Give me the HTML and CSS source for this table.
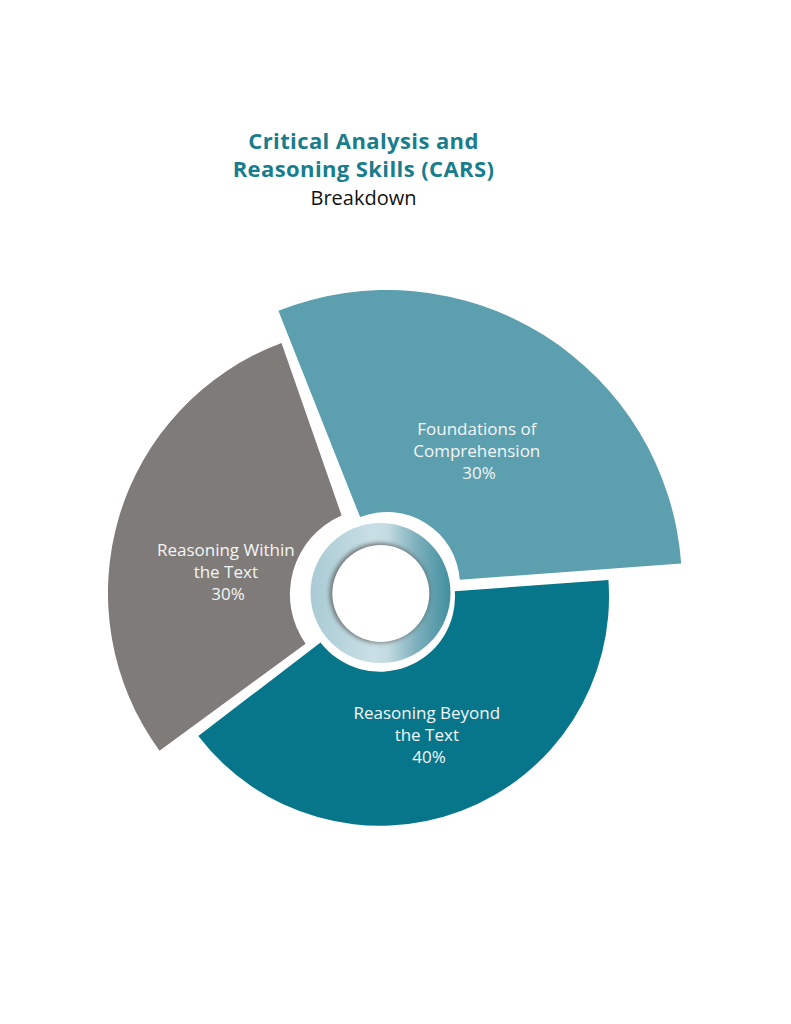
FILE: index.html
```html
<!DOCTYPE html>
<html lang="en">
<head>
<meta charset="utf-8">
<title>CARS Breakdown</title>
<link rel="stylesheet" href="styles.css">
</head>
<body>
<main class="page">
  <header class="title-block">
    <h1 class="title">Critical Analysis and<br>Reasoning Skills (CARS)</h1>
    <p class="subtitle">Breakdown</p>
  </header>
  <section class="chart">
    <svg class="chart-svg" width="791" height="774" viewBox="0 250 791 774" xmlns="http://www.w3.org/2000/svg">
      <defs>
        <linearGradient id="ringGrad" x1="0" y1="0" x2="1" y2="0">
          <stop offset="0" stop-color="#a9cbd4"/>
          <stop offset="0.45" stop-color="#c9dfe5"/>
          <stop offset="0.55" stop-color="#c3dbe1"/>
          <stop offset="0.75" stop-color="#7fb1bd"/>
          <stop offset="1" stop-color="#418f9f"/>
        </linearGradient>
        <filter id="holeShadow" x="-20%" y="-20%" width="140%" height="140%">
          <feGaussianBlur stdDeviation="2"/>
        </filter>
      </defs>
      <path class="slice slice-light" d="M278.4,310.7 A295,295 0 0 1 681.2,563.4 L459.8,579.7 A73,73 0 0 0 360.1,517.1 Z"/>
      <path class="slice slice-dark" d="M608.4,579.9 A229,229 0 0 1 198.3,736.1 L320.5,642.4 A75,75 0 0 0 454.8,591.2 Z"/>
      <path class="slice slice-gray" d="M159.5,750.7 A267,267 0 0 1 281.5,342.9 L341.6,515.4 A86,86 0 0 0 305.6,643.8 Z"/>
      <circle cx="380.5" cy="593" r="70" fill="url(#ringGrad)"/>
      <circle cx="379.5" cy="593" r="50" fill="#5a5a5a" opacity="0.75" filter="url(#holeShadow)"/>
      <circle cx="380.8" cy="593.5" r="48.5" fill="#ffffff"/>
      <text class="label" text-anchor="middle">
        <tspan x="479" y="435">Foundations of</tspan>
        <tspan x="479" y="457">Comprehension</tspan>
        <tspan x="479" y="479">30%</tspan>
      </text>
      <text class="label" text-anchor="middle">
        <tspan x="228" y="556">Reasoning Within</tspan>
        <tspan x="228" y="578">the Text</tspan>
        <tspan x="228" y="600">30%</tspan>
      </text>
      <text class="label" text-anchor="middle">
        <tspan x="429" y="719">Reasoning Beyond</tspan>
        <tspan x="429" y="741">the Text</tspan>
        <tspan x="429" y="763">40%</tspan>
      </text>
    </svg>
  </section>
</main>
</body>
</html>
```
FILE: styles.css
```css
html, body {
  margin: 0;
  padding: 0;
  background: #ffffff;
}

.page {
  width: 791px;
  height: 1024px;
  overflow: hidden;
  font-family: "Open Sans", "Lato", sans-serif;
}

.title-block {
  box-sizing: border-box;
  height: 250px;
  padding-top: 126px;
  padding-right: 64px;
  text-align: center;
}

.title {
  margin: 0;
  font-size: 22px;
  line-height: 28px;
  font-weight: 700;
  letter-spacing: 0.4px;
  color: #187d8d;
}

.subtitle {
  margin: 1px 0 0;
  font-size: 20px;
  line-height: 30px;
  font-weight: 400;
  color: #111111;
}

.chart {
  display: block;
}

.chart-svg {
  display: block;
}

.slice-light { fill: #5c9fae; }
.slice-dark { fill: #08768a; }
.slice-gray { fill: #7f7b79; }

.label {
  font-family: "Open Sans", "Lato", sans-serif;
  font-size: 17px;
  font-weight: 400;
  fill: #f4f6f6;
}
```
